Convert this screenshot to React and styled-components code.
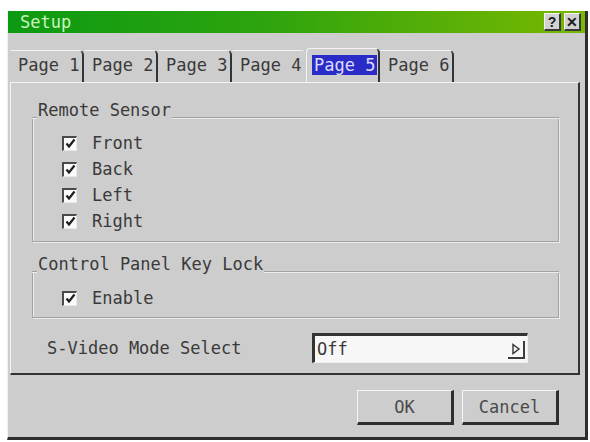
import React from "react";
import styled, { createGlobalStyle } from "styled-components";

const Global = createGlobalStyle`
  html, body {
    margin: 0;
    padding: 0;
    background: #ffffff;
  }
  body {
    font-family: "DejaVu Sans Mono", "Liberation Mono", monospace;
    font-size: 17px;
    color: #3a3a3a;
  }
`;

const Window = styled.div`
  box-sizing: border-box;
  margin: 11px 0 0 7px;
  width: 581px;
  height: 429px;
  background: #cdcdcd;
  border-left: 1px solid #f2f2f2;
  border-right: 3px solid #2e2e2e;
  border-bottom: 3px solid #2e2e2e;
  display: flex;
  flex-direction: column;
`;

const TitleBar = styled.div`
  height: 22px;
  display: flex;
  align-items: center;
  padding: 0 4px 0 12px;
  background: linear-gradient(to right, #0c9a12 0%, #2ea40e 45%, #79b800 100%);
`;

const Title = styled.span`
  flex: 1;
  color: #c9f3bd;
  line-height: 22px;
`;

const TitleButtons = styled.div`
  display: flex;
  gap: 3px;
`;

const TitleButton = styled.div`
  box-sizing: border-box;
  width: 17px;
  height: 18px;
  display: flex;
  align-items: center;
  justify-content: center;
  background: #d2d2d2;
  border-top: 1px solid #f4f4f4;
  border-left: 1px solid #f4f4f4;
  border-right: 2px solid #3a3a3a;
  border-bottom: 2px solid #3a3a3a;
  font-family: "Liberation Sans", Arial, sans-serif;
  font-weight: bold;
  font-size: 14px;
  color: #1a1a1a;
`;

const Body = styled.div`
  flex: 1;
  display: flex;
  flex-direction: column;
  padding: 15px 5px 0 2px;
`;

const TabRow = styled.div`
  height: 34px;
  display: flex;
  align-items: flex-end;
`;

const Tab = styled.div`
  box-sizing: border-box;
  width: 74px;
  height: ${(p) => (p.$active ? 34 : 32)}px;
  padding: ${(p) => (p.$active ? 6 : 4)}px 0 0 5px;
  border-top: 1px solid #f4f4f4;
  border-left: 1px solid ${(p) => (p.$active ? "#f4f4f4" : "transparent")};
  border-right: 2px solid ${(p) => (p.$hideEdge ? "transparent" : "#333333")};
  border-top-right-radius: 5px;
  border-top-left-radius: ${(p) => (p.$active ? 4 : 0)}px;
`;

const TabText = styled.span`
  display: inline-block;
  padding: 0 2px;
  line-height: 20px;
  background: ${(p) => (p.$active ? "#2b2bc8" : "transparent")};
  color: ${(p) => (p.$active ? "#dcdcff" : "#3a3a3a")};
`;

const Panel = styled.div`
  box-sizing: border-box;
  border-top: 1px solid #f4f4f4;
  border-left: 1px solid #f4f4f4;
  border-right: 2px solid #333333;
  border-bottom: 2px solid #333333;
  padding: 20px 20px 10px 21px;
  display: flex;
  flex-direction: column;
`;

const GroupWrap = styled.div`
  margin-bottom: 15px;
  width: 527px;
`;

const GroupHead = styled.div`
  height: 15px;
  display: flex;
  align-items: flex-start;
`;

const HeadRule = styled.div`
  flex: ${(p) => (p.$grow ? 1 : "none")};
  width: ${(p) => (p.$grow ? "auto" : "5px")};
  height: 14px;
  border-bottom: 1px solid #a2a2a2;
  box-shadow: 0 1px 0 #ececec;
`;

const GroupTitle = styled.span`
  line-height: 15px;
  padding: 0 1px;
  white-space: nowrap;
`;

const GroupBox = styled.div`
  border: 1px solid #a2a2a2;
  border-top: none;
  box-shadow: 1px 1px 0 #ececec, inset 1px 0 0 #ececec;
  padding: ${(p) => p.$pad};
  display: flex;
  flex-direction: column;
`;

const CheckRow = styled.label`
  height: 26px;
  display: flex;
  align-items: center;
  gap: 15px;
`;

const Box = styled.span`
  box-sizing: border-box;
  width: 15px;
  height: 15px;
  background: #fafafa;
  border-top: 2px solid #4a4a4a;
  border-left: 2px solid #4a4a4a;
  border-right: 1px solid #e8e8e8;
  border-bottom: 1px solid #e8e8e8;
  display: flex;
  align-items: center;
  justify-content: center;
`;

const SelectRow = styled.div`
  display: flex;
  align-items: center;
  padding-left: 15px;
`;

const SelectLabel = styled.span`
  width: 265px;
`;

const Select = styled.div`
  box-sizing: border-box;
  width: 216px;
  height: 30px;
  background: #f7f7f7;
  border-top: 3px solid #333333;
  border-left: 3px solid #333333;
  border-right: 1px solid #eeeeee;
  border-bottom: 1px solid #eeeeee;
  display: flex;
  align-items: center;
  padding: 0 2px 0 2px;
`;

const SelectValue = styled.span`
  flex: 1;
`;

const SpinButton = styled.span`
  box-sizing: border-box;
  width: 17px;
  height: 18px;
  margin-top: 2px;
  border-right: 2px solid #3c3c3c;
  border-bottom: 2px solid #3c3c3c;
  display: flex;
  align-items: center;
  justify-content: center;
`;

const Footer = styled.div`
  flex: 1;
  display: flex;
  justify-content: flex-end;
  align-items: flex-start;
  gap: 8px;
  padding: 15px 21px 0 0;
`;

const Button = styled.button`
  box-sizing: border-box;
  width: 97px;
  height: 35px;
  background: #cdcdcd;
  border: none;
  border-top: 1px solid #f4f4f4;
  border-left: 1px solid #f4f4f4;
  border-right: 3px solid #2e2e2e;
  border-bottom: 3px solid #2e2e2e;
  font-family: inherit;
  font-size: 17px;
  color: #4a4a4a;
  padding: 0;
`;

const Check = () => (
  <svg width="11" height="11" viewBox="0 0 11 11">
    <path d="M1.5 5.5 L4 8.5 L9.5 1.5" fill="none" stroke="#1e1e1e" strokeWidth="2.2" />
  </svg>
);

const Checkbox = ({ label }) => (
  <CheckRow>
    <Box>
      <Check />
    </Box>
    <span>{label}</span>
  </CheckRow>
);

const Group = ({ title, pad, children }) => (
  <GroupWrap>
    <GroupHead>
      <HeadRule />
      <GroupTitle>{title}</GroupTitle>
      <HeadRule $grow />
    </GroupHead>
    <GroupBox $pad={pad}>{children}</GroupBox>
  </GroupWrap>
);

const pages = ["Page 1", "Page 2", "Page 3", "Page 4", "Page 5", "Page 6"];

export default function App() {
  const current = 4;
  return (
    <>
      <Global />
      <Window>
        <TitleBar>
          <Title>Setup</Title>
          <TitleButtons>
            <TitleButton>?</TitleButton>
            <TitleButton>✕</TitleButton>
          </TitleButtons>
        </TitleBar>
        <Body>
          <TabRow>
            {pages.map((p, i) => (
              <Tab key={p} $active={i === current} $hideEdge={i === current - 1}>
                <TabText $active={i === current}>{p}</TabText>
              </Tab>
            ))}
          </TabRow>
          <Panel>
            <Group title="Remote Sensor" pad="12px 0 7px 29px">
              <Checkbox label="Front" />
              <Checkbox label="Back" />
              <Checkbox label="Left" />
              <Checkbox label="Right" />
            </Group>
            <Group title="Control Panel Key Lock" pad="13px 0 6px 29px">
              <Checkbox label="Enable" />
            </Group>
            <SelectRow>
              <SelectLabel>S-Video Mode Select</SelectLabel>
              <Select>
                <SelectValue>Off</SelectValue>
                <SpinButton>
                  <svg width="10" height="12" viewBox="0 0 10 12">
                    <path d="M2 1.5 L8 6 L2 10.5 Z" fill="none" stroke="#333" strokeWidth="1.4" />
                  </svg>
                </SpinButton>
              </Select>
            </SelectRow>
          </Panel>
          <Footer>
            <Button>OK</Button>
            <Button>Cancel</Button>
          </Footer>
        </Body>
      </Window>
    </>
  );
}
